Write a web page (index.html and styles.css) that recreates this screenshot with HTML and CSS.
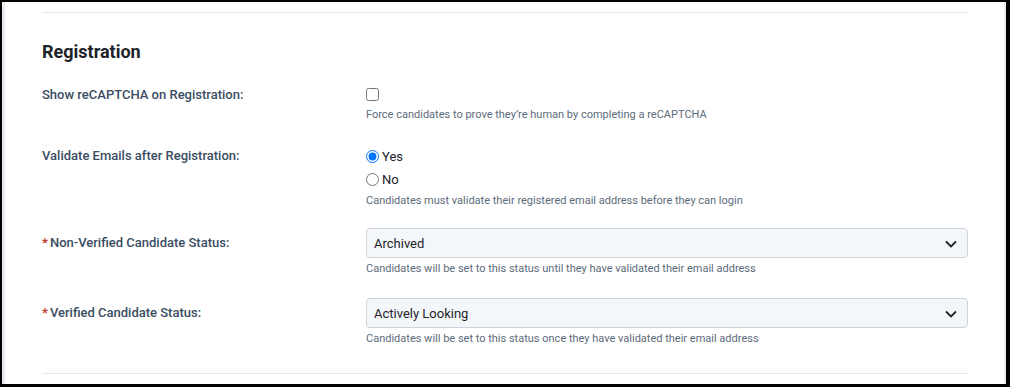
FILE: index.html
```html
<!DOCTYPE html>
<html lang="en">
<head>
    <meta charset="UTF-8">
    <meta name="viewport" content="width=device-width, initial-scale=1.0">
    <title>Registration Settings</title>
    <link rel="stylesheet" href="styles.css">
</head>
<body>
    <div class="frame">
        <div class="panel">
            <div class="divider"></div>
            <h2>Registration</h2>

            <div class="row">
                <label class="label" for="recaptcha">Show reCAPTCHA on Registration:</label>
                <div class="field">
                    <div class="line">
                        <input type="checkbox" id="recaptcha">
                    </div>
                    <p class="help">Force candidates to prove they’re human by completing a reCAPTCHA</p>
                </div>
            </div>

            <div class="row row-radio">
                <div class="label">Validate Emails after Registration:</div>
                <div class="field">
                    <label class="line radio">
                        <input type="radio" name="validate" checked> Yes
                    </label>
                    <label class="line radio">
                        <input type="radio" name="validate"> No
                    </label>
                    <p class="help">Candidates must validate their registered email address before they can login</p>
                </div>
            </div>

            <div class="row row-select">
                <div class="label"><span class="req">*</span>Non-Verified Candidate Status:</div>
                <div class="field">
                    <div class="select">
                        <span>Archived</span>
                        <svg width="12" height="8" viewBox="0 0 12 8"><path d="M1 1.5l5 5 5-5" fill="none" stroke="#222" stroke-width="1.8"/></svg>
                    </div>
                    <p class="help">Candidates will be set to this status until they have validated their email address</p>
                </div>
            </div>

            <div class="row row-select">
                <div class="label"><span class="req">*</span>Verified Candidate Status:</div>
                <div class="field">
                    <div class="select">
                        <span>Actively Looking</span>
                        <svg width="12" height="8" viewBox="0 0 12 8"><path d="M1 1.5l5 5 5-5" fill="none" stroke="#222" stroke-width="1.8"/></svg>
                    </div>
                    <p class="help">Candidates will be set to this status once they have validated their email address</p>
                </div>
            </div>

            <div class="divider bottom"></div>
        </div>
    </div>
</body>
</html>
```

FILE: styles.css
```css
* { margin: 0; padding: 0; box-sizing: border-box; }
html, body { height: 100%; }
body {
    background: #000;
    font-family: Roboto, 'Liberation Sans', sans-serif;
    padding: 2px 4px 3px 2px;
}
.frame {
    height: 100%;
    background: #fff;
    border-left: 3px solid #e9edf2;
    border-right: 2px solid #e9edf2;
}
.panel { padding: 10px 36px 0 37px; }
.divider { height: 1px; background: #e6e8ea; }
.divider.bottom { margin-top: 27px; }
h2 {
    font-size: 18px;
    font-weight: 700;
    color: #1e2329;
    line-height: 21px;
    margin: 28px 0 21px;
}
.row {
    display: grid;
    grid-template-columns: 324px 1fr;
    margin-bottom: 22px;
}
.row-radio { margin-bottom: 20px; }
.row:last-of-type { margin-bottom: 0; }
.label {
    font-size: 13px;
    font-weight: 500;
    color: #3a4d62;
    line-height: 23px;
}
.row-select .label { line-height: 30px; }
.req { color: #c0392b; font-weight: 700; margin-right: 2px; }
.line {
    display: flex;
    align-items: center;
    height: 23px;
    font-size: 13px;
    color: #1e2329;
}
.line input { width: 13px; height: 13px; margin: 0; }
.radio input { margin-right: 3px; }
.row-radio .field { padding-top: 1px; }
.help {
    font-size: 11px;
    line-height: 14px;
    color: #5c6b7b;
    margin-top: 2px;
}
.row-radio .help { margin-top: 3px; }
.row-select .help { margin-top: 4px; }
.select {
    display: flex;
    align-items: center;
    justify-content: space-between;
    height: 30px;
    padding: 0 10px 0 7px;
    background: #f4f7fa;
    border: 1px solid #cdd3d9;
    border-radius: 4px;
    font-size: 13px;
    color: #1e2329;
}
.select svg { margin-top: 1px; }
```
